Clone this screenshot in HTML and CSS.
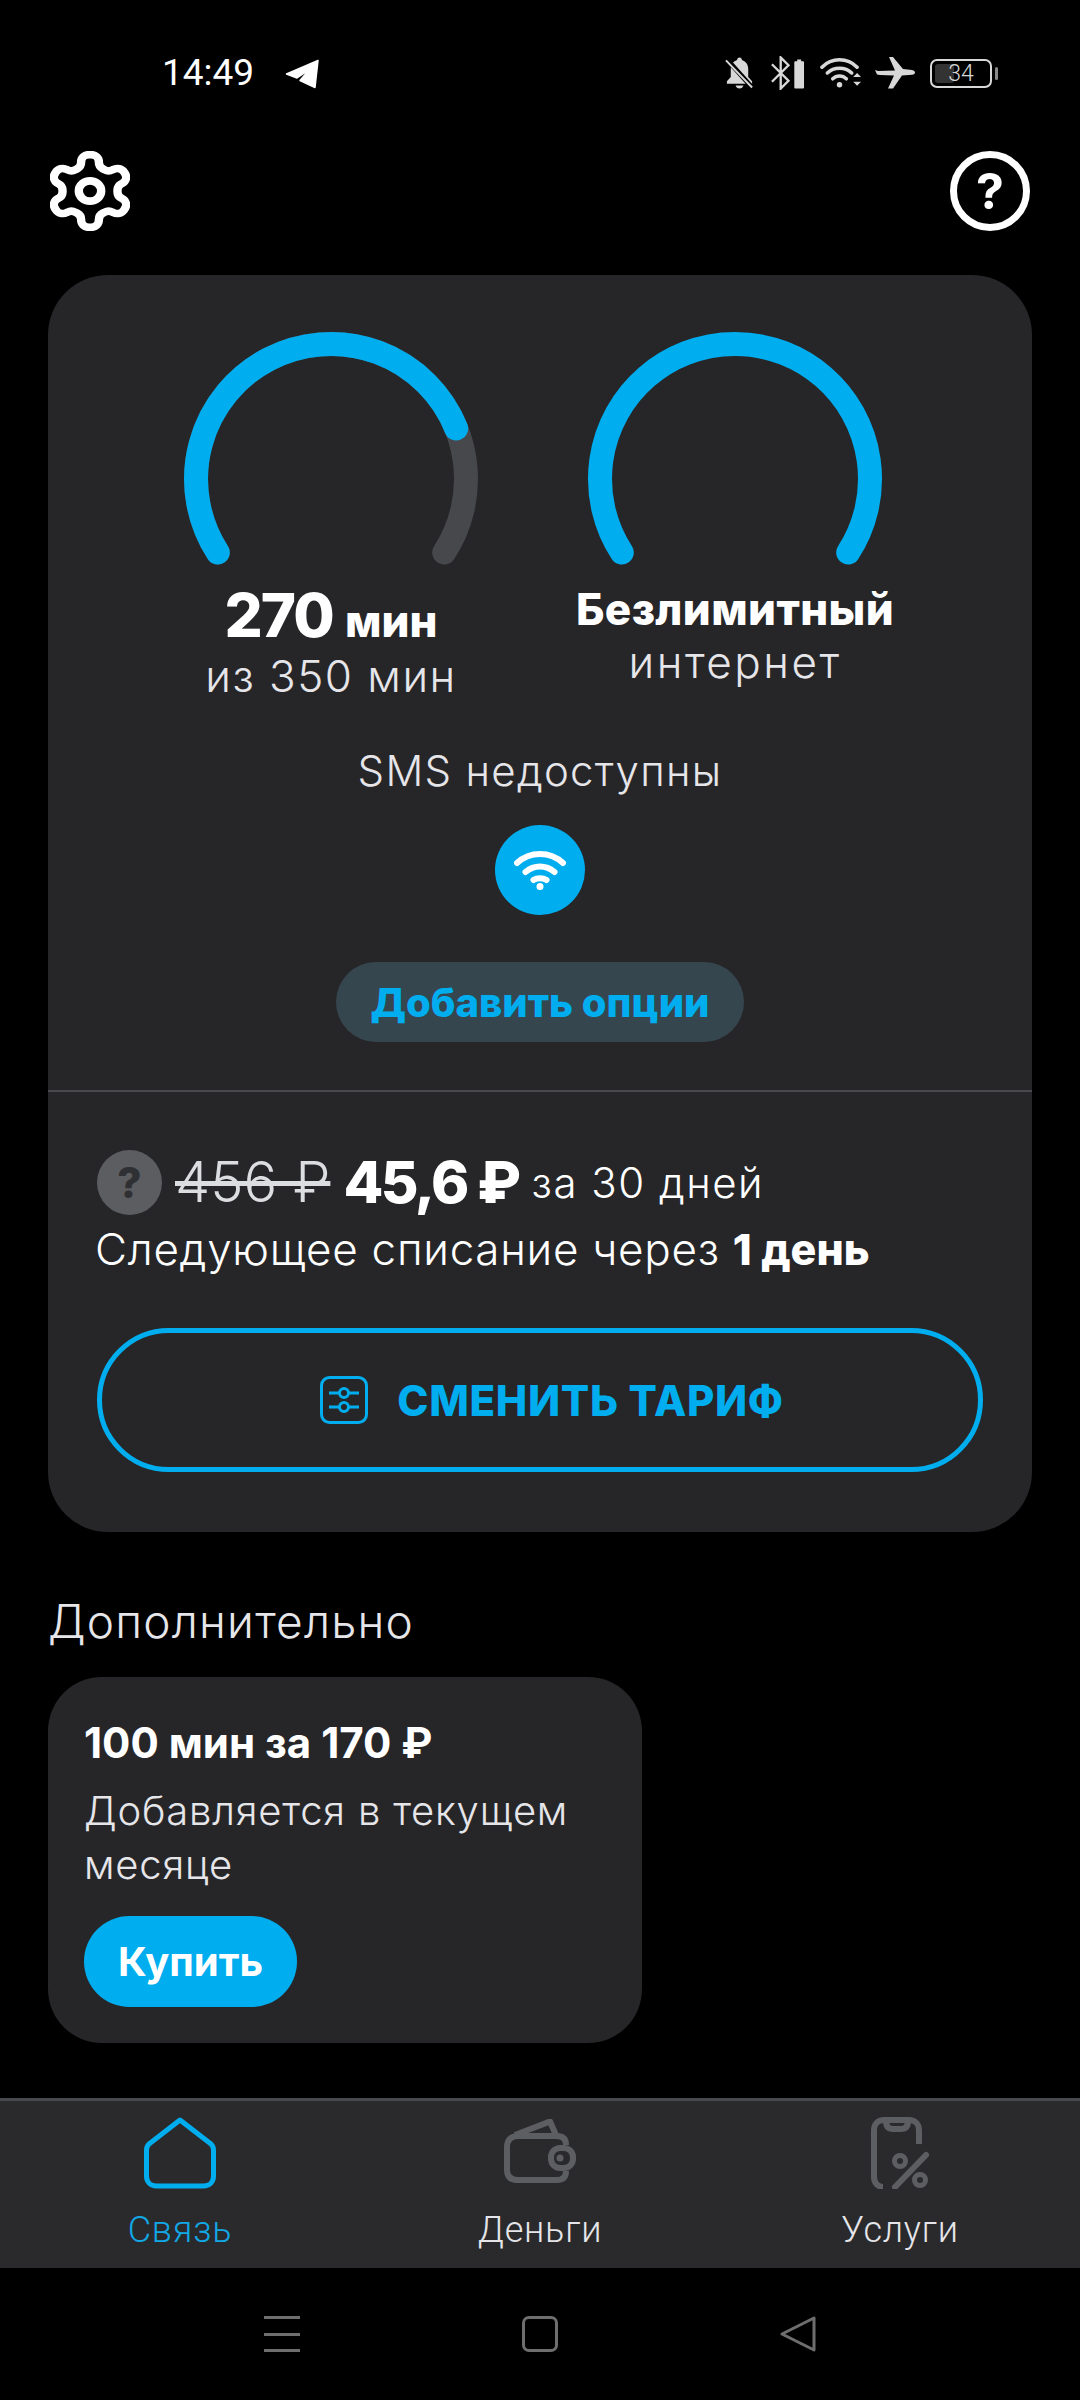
FILE: index.html
```html
<!DOCTYPE html>
<html lang="ru">
<head>
  <meta charset="UTF-8" />
  <title>Связь</title>
  <link rel="stylesheet" href="styles.css">
</head>
<body>

  <!-- Статус-бар -->
  <div class="status">
    <span class="status-time">14:49</span>
    <svg class="ic-tg" viewBox="0 0 35 30"><path d="M33 1.500L1.500 15 12 19 24 11 15 21.500 30 28.500z" fill="#fff" stroke="#fff" stroke-width="1.500" stroke-linejoin="round"/></svg>
    <div class="status-icons">
      <svg class="ic-bell" viewBox="0 0 32 34"><path d="M16 1c1.500 0 2.500 1 2.500 2.500C23 5 25 8.500 25 13v8l4 4.500v2.500H3v-2.500l4-4.500v-8c0-4.500 2-8 6.500-9.500C13.500 2 14.500 1 16 1z" fill="#d8d8d8"/><path d="M12 30h8c-.5 2-2 3-4 3s-3.500-1-4-3z" fill="#d8d8d8"/><path d="M3 3l27 30" stroke="#000" stroke-width="5"/><path d="M2 4l27 28" stroke="#d8d8d8" stroke-width="2"/></svg>
      <svg class="ic-bt" viewBox="0 0 36 34"><path d="M2 8l17 17-8 8V1l8 8L2 26" fill="none" stroke="#d8d8d8" stroke-width="2.400"/><path d="M26 5h2V3h4v2h2a1 1 0 0 1 1 1v26a1 1 0 0 1-1 1h-8a1 1 0 0 1-1-1V6a1 1 0 0 1 1-1z" fill="#d8d8d8"/></svg>
      <svg class="ic-wifi" viewBox="0 0 42 34" fill="none" stroke="#d8d8d8" stroke-width="3.600" stroke-linecap="round"><path d="M2 11C12 1 28 1 38 11"/><path d="M7.500 17C14 10.500 26 10.500 32.500 17"/><path d="M13 23C17 19 23 19 27 23"/><circle cx="20" cy="29" r="2.800" fill="#d8d8d8" stroke="none"/><path d="M34 21l4-4 4 4zM34 26l4 4 4-4z" fill="#d8d8d8" stroke="none"/></svg>
      <svg class="ic-plane" viewBox="0 0 40 32"><path d="M14 0h4l10 12 9 1c2 .3 3 1.500 3 2.500s-1 2-3 2.200l-10 .8-9 13h-5l6-13-14-.5-3-.5L0 13l3 1 17-.5z" fill="#d8d8d8"/></svg>
      <div class="battery"><span class="battery-fill"></span><span class="battery-num">34</span></div>
      <span class="battery-nub"></span>
    </div>
  </div>

  <!-- Верхние кнопки -->
  <div class="topbar">
    <svg class="ic-gear" viewBox="2 1 20 22" preserveAspectRatio="none" fill="none" stroke="#fff" stroke-width="2.100" stroke-linejoin="round"><path d="M12.220 2h-.44a2 2 0 0 0-2 2v.18a2 2 0 0 1-1 1.730l-.43.25a2 2 0 0 1-2 0l-.15-.08a2 2 0 0 0-2.730.73l-.22.38a2 2 0 0 0 .73 2.730l.15.1a2 2 0 0 1 1 1.720v.51a2 2 0 0 1-1 1.740l-.15.09a2 2 0 0 0-.73 2.730l.22.38a2 2 0 0 0 2.730.73l.15-.08a2 2 0 0 1 2 0l.43.25a2 2 0 0 1 1 1.730V20a2 2 0 0 0 2 2h.44a2 2 0 0 0 2-2v-.18a2 2 0 0 1 1-1.730l.43-.25a2 2 0 0 1 2 0l.15.08a2 2 0 0 0 2.730-.73l.22-.39a2 2 0 0 0-.73-2.730l-.15-.08a2 2 0 0 1-1-1.740v-.5a2 2 0 0 1 1-1.740l.15-.09a2 2 0 0 0 .73-2.730l-.22-.38a2 2 0 0 0-2.730-.73l-.15.08a2 2 0 0 1-2 0l-.43-.25a2 2 0 0 1-1-1.730V4a2 2 0 0 0-2-2z"/><circle cx="12" cy="12" r="2.800"/></svg>
    <div class="help">?</div>
  </div>

  <!-- Карточка тарифа -->
  <section class="card">
    <div class="gauges">
      <div class="gauge">
        <svg class="gauge-arc" viewBox="0 0 294 232" fill="none" stroke-width="24" stroke-linecap="round">
          <path d="M33.800 220.500 A135 135 0 1 1 260.200 220.500" stroke="#47484c"/>
          <path d="M33.800 220.500 A135 135 0 1 1 272.200 96.400" stroke="#00aeef"/>
        </svg>
        <div class="gauge-main"><b class="big">270</b> <b>мин</b></div>
        <div class="gauge-sub">из 350 мин</div>
      </div>
      <div class="gauge gauge-net">
        <svg class="gauge-arc" viewBox="0 0 294 232" fill="none" stroke-width="24" stroke-linecap="round">
          <path d="M33.800 220.500 A135 135 0 1 1 260.200 220.500" stroke="#00aeef"/>
        </svg>
        <div class="gauge-main"><b>Безлимитный</b></div>
        <div class="gauge-sub">интернет</div>
      </div>
    </div>

    <p class="sms">SMS недоступны</p>
    <div class="wifi-badge">
      <svg viewBox="0 0 52 39" fill="none" stroke="#fff" stroke-width="6" stroke-linecap="round"><path d="M3 12C16 0 36 0 49 12"/><path d="M11.500 21C20 13.500 32 13.500 40.500 21"/><path d="M19.500 29C23 26.500 29 26.500 32.500 29"/><circle cx="26" cy="35.500" r="3.500" fill="#fff" stroke="none"/></svg>
    </div>
    <div class="options"><button class="options-btn">Добавить опции</button></div>

    <div class="price">
      <div class="price-row">
        <span class="price-q">?</span>
        <s class="price-old">456 ₽</s>
        <b class="price-new">45,6 ₽</b>
        <span class="price-term">за 30 дней</span>
      </div>
      <p class="price-next">Следующее списание через <b>1 день</b></p>
      <button class="change-btn">
        <svg viewBox="0 0 48 48" fill="none" stroke="#00aeef" stroke-width="3"><rect x="1.500" y="1.500" width="45" height="45" rx="8"/><path d="M9 17h30M9 31h30"/><circle cx="24" cy="17" r="4.500" fill="#262629"/><circle cx="24" cy="31" r="4.500" fill="#262629"/></svg>
        <span>СМЕНИТЬ ТАРИФ</span>
      </button>
    </div>
  </section>

  <!-- Дополнительно -->
  <h2 class="extra-title">Дополнительно</h2>
  <section class="extra-card">
    <h3>100 мин за 170 ₽</h3>
    <p>Добавляется в текущем месяце</p>
    <button class="buy-btn">Купить</button>
  </section>

  <!-- Нижнее меню -->
  <nav class="tabs">
    <div class="tab tab-active">
      <svg class="ic-home" viewBox="0 0 72 72" fill="none" stroke="#00aeef" stroke-width="5" stroke-linejoin="round"><path d="M36 3L67 27c1.500 1.500 2.500 3 2.500 6v26c0 6-4 10-10 10H12.500c-6 0-10-4-10-10V33c0-3 1-4.500 2.500-6z"/></svg>
      <span>Связь</span>
    </div>
    <div class="tab">
      <svg class="ic-wallet" viewBox="0 0 72 64" fill="none" stroke="#5d5e62" stroke-width="6" stroke-linejoin="round"><path d="M11 16L46 2.500 51.500 15"/><path d="M62 26c0-6-3-9-9-9H14C7 17 3 21 3 28v23c0 7 4 10 11 10h39c6 0 9-3 9-9"/><rect x="47" y="29" width="22" height="20" rx="9"/><circle cx="56" cy="39" r="3.500" fill="#5d5e62" stroke="none"/></svg>
      <span>Деньги</span>
    </div>
    <div class="tab">
      <svg class="ic-phone" viewBox="0 0 58 72" fill="none" stroke="#5d5e62" stroke-width="6"><path d="M48 27V13C48 7 44 3 38 3H13C7 3 3 7 3 13v47c0 6 4 10 9 10"/><path d="M15 4c0 5 2 8 7 8h8c5 0 7-3 7-8"/><path d="M55 38L24 70" stroke-linecap="round"/><circle cx="29" cy="44" r="5.500" stroke-width="5"/><circle cx="49" cy="63" r="5.500" stroke-width="5"/></svg>
      <span>Услуги</span>
    </div>
  </nav>

  <!-- Системная навигация -->
  <div class="sysnav">
    <div class="sys-menu"><i></i><i></i><i></i></div>
    <div class="sys-home"></div>
    <svg class="sys-back" viewBox="0 0 36 36" fill="none" stroke="#6e6e6e" stroke-width="3" stroke-linejoin="round"><path d="M34 2v32L2 18z"/></svg>
  </div>

</body>
</html>
```

FILE: styles.css
```css
* {
  box-sizing: border-box;
  margin: 0;
  padding: 0;
}

body {
  width: 1080px;
  height: 2400px;
  overflow: hidden;
  background: #000;
  color: #e6e6ea;
  font-family: Inter, "Noto Sans", sans-serif;
}

button {
  border: none;
  background: none;
  font-family: inherit;
  display: block;
}

svg {
  display: block;
}

/* Статус-бар */
.status {
  height: 151px;
  padding: 53px 82px 0 162px;
  display: flex;
  align-items: flex-start;
}

.status-time {
  font-family: Roboto, sans-serif;
  font-size: 37px;
  line-height: 40px;
  width: 123px;
  color: #fff;
}

.ic-tg {
  width: 35px;
  height: 30px;
  margin-top: 6px;
}

.status-icons {
  margin-left: auto;
  display: flex;
  align-items: center;
  height: 40px;
}

.ic-bell { width: 31px; height: 34px; margin-right: 15px; }
.ic-bt { width: 35px; height: 34px; margin-right: 15px; }
.ic-wifi { width: 41px; height: 34px; margin-right: 14px; }
.ic-plane { width: 40px; height: 32px; margin-right: 15px; }

.battery {
  width: 62px;
  height: 29px;
  border: 2px solid #d8d8d8;
  border-radius: 7px;
  position: relative;
  display: flex;
  align-items: center;
  justify-content: center;
  padding: 2px;
}

.battery-fill {
  position: absolute;
  left: 3px;
  top: 3px;
  bottom: 3px;
  width: 19px;
  background: #333;
  border-radius: 3px;
}

.battery-num {
  position: relative;
  font-family: Roboto, sans-serif;
  font-size: 23px;
  font-weight: 300;
  color: #d8d8d8;
}

.battery-nub {
  width: 3px;
  height: 13px;
  background: #888;
  margin-left: 3px;
  border-radius: 2px;
}

/* Верхние кнопки */
.topbar {
  height: 124px;
  padding: 0 50px;
  display: flex;
  justify-content: space-between;
  align-items: flex-start;
}

.ic-gear {
  width: 80px;
  height: 80px;
}

.help {
  width: 80px;
  height: 80px;
  border: 7px solid #fff;
  border-radius: 50%;
  color: #fff;
  font-size: 50px;
  font-weight: 700;
  line-height: 66px;
  text-align: center;
}

/* Карточка тарифа */
.card {
  margin: 0 48px;
  height: 1257px;
  background: #262629;
  border-radius: 60px;
  padding-top: 57px;
}

.gauges {
  display: grid;
  grid-template-columns: 404px 404px;
  padding-left: 81px;
}

.gauge {
  text-align: center;
}

.gauge-arc {
  width: 294px;
  height: 232px;
  margin: 0 auto;
  overflow: visible;
}

.gauge-main {
  color: #fff;
  font-size: 44px;
  line-height: 62px;
  margin-top: 20px;
  height: 62px;
}

.gauge-main b {
  font-weight: 800;
}

.gauge-main .big {
  font-size: 60px;
  letter-spacing: -2px;
}

.gauge-sub {
  font-size: 44px;
  line-height: 54px;
  font-weight: 350;
  letter-spacing: 1.5px;
  margin-top: 3px;
}

.gauge-net .gauge-main {
  margin-top: 14px;
  letter-spacing: 0.4px;
}

.gauge-net .gauge-sub {
  margin-top: -5px;
  letter-spacing: 2.500px;
}

.sms {
  text-align: center;
  font-size: 42px;
  line-height: 52px;
  font-weight: 350;
  letter-spacing: 1.300px;
  margin-top: 42px;
}

.wifi-badge {
  width: 90px;
  height: 90px;
  margin: 28px auto 0;
  border-radius: 50%;
  background: #00aeef;
  display: flex;
  align-items: center;
  justify-content: center;
}

.wifi-badge svg {
  width: 52px;
  height: 39px;
}

.options {
  margin-top: 47px;
  padding-bottom: 48px;
  border-bottom: 2px solid #48494c;
}

.options-btn {
  width: 408px;
  height: 80px;
  margin: 0 auto;
  border-radius: 40px;
  background: #36464f;
  color: #00aeef;
  font-size: 40px;
  font-weight: 800;
}

.price {
  padding: 57px 49px 0;
}

.price-row {
  display: flex;
  align-items: center;
  height: 66px;
}

.price-q {
  width: 65px;
  height: 65px;
  border-radius: 50%;
  background: #5c5d60;
  color: #2f3033;
  font-size: 42px;
  font-weight: 800;
  line-height: 65px;
  text-align: center;
  margin-right: 13px;
}

.price-old {
  font-size: 56px;
  font-weight: 300;
  color: #dcdde1;
  margin-right: 13px;
}

.price-new {
  color: #fff;
  font-size: 58px;
  font-weight: 800;
  letter-spacing: -2.500px;
  margin-right: 13px;
}

.price-term {
  color: #fff;
  font-size: 42px;
  font-weight: 350;
  letter-spacing: 1.500px;
}

.price-next {
  color: #fff;
  font-size: 44px;
  font-weight: 350;
  letter-spacing: 0.700px;
  line-height: 52px;
  margin-top: 8px;
  margin-left: -2px;
  white-space: nowrap;
}

.price-next b {
  font-size: 43px;
  font-weight: 800;
  letter-spacing: 0;
}

.change-btn {
  width: 886px;
  height: 144px;
  margin-top: 53px;
  padding-left: 24px;
  border: 5px solid #00aeef;
  border-radius: 72px;
  color: #00aeef;
  font-size: 42px;
  font-weight: 800;
  letter-spacing: 0.7px;
  display: flex;
  align-items: center;
  justify-content: center;
  gap: 29px;
}

.change-btn svg {
  width: 48px;
  height: 48px;
}

/* Дополнительно */
.extra-title {
  margin: 61px 48px 0;
  font-size: 46px;
  line-height: 56px;
  font-weight: 350;
  letter-spacing: 1.200px;
}

.extra-card {
  width: 594px;
  height: 366px;
  margin: 28px 0 0 48px;
  padding: 40px 36px 0;
  background: #262629;
  border-radius: 54px;
}

.extra-card h3 {
  color: #fff;
  font-size: 42px;
  line-height: 52px;
  font-weight: 700;
}

.extra-card p {
  font-size: 40px;
  line-height: 54px;
  font-weight: 350;
  letter-spacing: 0.800px;
  margin-top: 15px;
}

.buy-btn {
  width: 213px;
  height: 91px;
  margin-top: 24px;
  border-radius: 46px;
  background: #00aeef;
  color: #fff;
  font-size: 40px;
  font-weight: 700;
}

/* Нижнее меню */
.tabs {
  margin-top: 55px;
  height: 170px;
  background: #2a2a2d;
  border-top: 3px solid #48494c;
  display: grid;
  grid-template-columns: repeat(3, 360px);
}

.tab {
  display: flex;
  flex-direction: column;
  align-items: center;
  height: 167px;
  padding-top: 16px;
}

.tab svg {
  flex: none;
}

.ic-home,
.ic-phone {
  height: 72px;
}

.ic-home { width: 72px; }
.ic-phone { width: 58px; }

.ic-wallet {
  width: 72px;
  height: 64px;
  margin: 2px 0 6px;
}

.tab span {
  font-family: Roboto, sans-serif;
  font-size: 36px;
  font-weight: 300;
  letter-spacing: 0.800px;
  line-height: 42px;
  margin-top: 20px;
}

.tab-active span {
  color: #12a8e6;
}

/* Системная навигация */
.sysnav {
  height: 132px;
  padding: 48px 264px 0;
  display: flex;
  justify-content: space-between;
  align-items: flex-start;
}

.sys-menu {
  width: 36px;
  height: 36px;
  display: flex;
  flex-direction: column;
  justify-content: space-between;
}

.sys-menu i {
  display: block;
  height: 3px;
  background: #6e6e6e;
}

.sys-home {
  width: 36px;
  height: 36px;
  border: 3px solid #6e6e6e;
  border-radius: 7px;
}

.sys-back {
  width: 36px;
  height: 36px;
}
```
